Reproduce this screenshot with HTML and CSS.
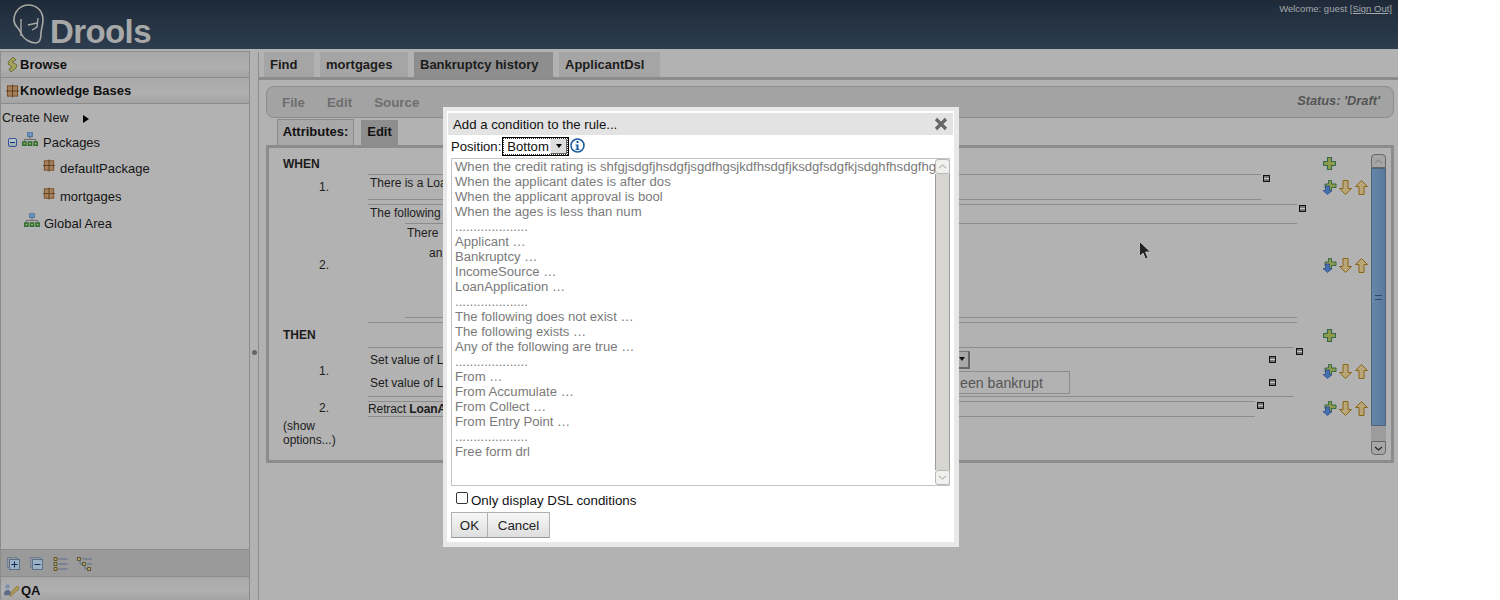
FILE: index.html
```html
<!DOCTYPE html>
<html lang="en">
<head>
<meta charset="utf-8">
<title>Drools Guvnor</title>
<link rel="stylesheet" href="styles.css">
</head>
<body>
<svg class="defs" width="0" height="0">
  <defs>
    <symbol id="pkg" viewBox="0 0 14 14">
      <rect x="1.5" y="1.5" width="11" height="11" fill="#a5805c" stroke="#75481f"/>
      <path d="M7 0v14M0 7h14" stroke="#5c3a1a" stroke-width="1"/>
    </symbol>
    <symbol id="tree" viewBox="0 0 17 15">
      <rect x="6" y="0" width="5" height="5" fill="#6f93bd" stroke="#4d6f99" stroke-width="1"/>
      <path d="M8.5 5v3M2.5 10V8h12v2" stroke="#666" fill="none"/>
      <path d="M0 10h5v5H0zM6 10h5v5H6zM12 10h5v5h-5z" fill="#2f6b2f"/>
      <path d="M1.5 11.500h2v2h-2zM7.500 11.500h2v2h-2zM13.500 11.500h2v2h-2z" fill="#8db36b"/>
    </symbol>
    <symbol id="plus" viewBox="0 0 13 13">
      <path d="M4.500.5h4v4h4v4h-4v4h-4v-4h-4v-4h4z" fill="#8f9a4a" stroke="#356b4c" stroke-width="1.200"/>
    </symbol>
    <symbol id="addnear" viewBox="0 0 15 15">
      <path d="M6.500.5h3v3.500h4.500v3.500H9.500v3.500h-3V7.500H3V4h3.500z" fill="#8f9a4a" stroke="#356b4c"/>
      <path d="M3.500 6h4v4.500h2.500L5.500 14.500 1 10.500h2.500z" fill="#466fb0" stroke="#2b4f8c" stroke-width=".8"/>
    </symbol>
    <symbol id="down" viewBox="0 0 13 15">
      <path d="M4 .5h5v8h3.500L6.500 14.500.5 8.500H4z" fill="#b8a678" stroke="#8a6518"/>
    </symbol>
    <symbol id="up" viewBox="0 0 13 15">
      <path d="M4 14.500h5v-8h3.500L6.500.5.500 6.500H4z" fill="#b8a678" stroke="#8a6518"/>
    </symbol>
    <symbol id="minus" viewBox="0 0 7 7">
      <rect x=".5" y=".5" width="6" height="6" fill="#777" stroke="#111"/>
      <path d="M1 3.500h5" stroke="#ccc"/>
    </symbol>
  </defs>
</svg>
<div class="app">
  <header class="topbar">
    <div class="logo">
      <svg class="head" viewBox="0 0 32 41" width="32" height="41">
        <path d="M1 16C1 6 9 1 15 1c10 0 15 7 15 15 0 5-2 10-2 13 0 6-2 10-5 10-6 0-12-4-14-8-2-4-3-6-5-8-2-2-3-4-3-7z" fill="none" stroke="#a8a8a4" stroke-width="1.600"/>
        <path d="M8 15v17M15 21l9-2M19 26l5-3 1-9" fill="none" stroke="#a8a8a4" stroke-width="1.400"/>
      </svg>
      <span class="logo-text">Drools</span>
    </div>
    <div class="welcome">Welcome: guest <a class="signout">[Sign Out]</a></div>
  </header>
  <div class="main">
    <aside class="sidebar">
      <div class="acc-head"><svg class="acc-ico" viewBox="0 0 13 15" width="13" height="15"><path d="M7 0l3 3-4 2 5 3-1 3-5 4-2-3 3-2-4-3 1-3z" fill="#a3a35a" stroke="#66663a" stroke-width=".9"/></svg>Browse</div>
      <div class="acc-head"><svg class="acc-ico" width="13" height="14"><use href="#pkg"/></svg>Knowledge Bases</div>
      <div class="acc-body">
        <div class="create">Create New<span class="tri"></span></div>
        <div class="node node-packages"><span class="toggle"></span><svg class="tree-ico" width="16" height="14"><use href="#tree"/></svg>Packages</div>
        <div class="node node-leaf"><svg class="pkg-ico" width="12" height="13"><use href="#pkg"/></svg>defaultPackage</div>
        <div class="node node-leaf"><svg class="pkg-ico" width="12" height="13"><use href="#pkg"/></svg>mortgages</div>
        <div class="node node-global"><svg class="tree-ico" width="16" height="14"><use href="#tree"/></svg>Global Area</div>
      </div>
      <div class="tree-tools">
        <svg viewBox="0 0 14 14" width="14" height="14"><path d="M.5.5h10v2M.5.5v10h2" fill="none" stroke="#6d7f96"/><rect x="2.500" y="2.500" width="10" height="10" fill="#9cb0c4" stroke="#5b7088"/><path d="M4.500 7.500h6M7.500 4.500v6" stroke="#0c3057"/></svg>
        <svg viewBox="0 0 14 14" width="14" height="14"><path d="M.5.5h10v2M.5.5v10h2" fill="none" stroke="#6d7f96"/><rect x="2.500" y="2.500" width="10" height="10" fill="#9cb0c4" stroke="#5b7088"/><path d="M4.500 7.500h6" stroke="#0c3057"/></svg>
        <svg viewBox="0 0 14 14" width="15" height="14"><path d="M.5.5h3v3h-3zM.5 5.500h3v3h-3zM.5 10.500h3v3h-3z" fill="#a9a382" stroke="#5e5620"/><path d="M5 2h9M5 7h9M5 12h9" stroke="#5b7088"/></svg>
        <svg viewBox="0 0 15 14" width="15" height="14"><path d="M.5.500h3v3h-3zM5.500 5.500h3v3h-3zM10.500 10.500h3v3h-3z" fill="#a9a382" stroke="#5e5620"/><path d="M5 2h10M10 7h5M3 3v4h2M8 8v4h2" stroke="#5b7088" fill="none"/></svg>
      </div>
      <div class="acc-head acc-qa"><svg class="acc-ico" viewBox="0 0 18 14" width="16" height="14"><circle cx="4" cy="3" r="2.500" fill="#7e8fae"/><path d="M0 13c0-4 1-6 4-6s4 2 4 6z" fill="#5d6c88"/><path d="M6 13l5-7 3-3 3 1-1 3-3 2-5 5z" fill="#b09a5a" stroke="#7a6630" stroke-width=".7"/></svg>QA</div>
    </aside>
    <div class="splitter"><span class="split-dot"></span></div>
    <section class="content">
      <nav class="doc-tabs">
        <div class="doc-tab">Find</div>
        <div class="doc-tab">mortgages</div>
        <div class="doc-tab doc-tab-on">Bankruptcy history</div>
        <div class="doc-tab">ApplicantDsl</div>
      </nav>
      <div class="toolbar">
        <span class="tool">File</span><span class="tool">Edit</span><span class="tool">Source</span>
        <span class="status">Status: 'Draft'</span>
      </div>
      <div class="sub-tabs">
        <div class="sub-tab">Attributes:</div>
        <div class="sub-tab sub-tab-on">Edit</div>
      </div>
      <div class="rule-panel">
        <div class="rule-body">
          <div class="row row-head row-when">
            <div class="head-label">WHEN</div>
            <div class="actions"><svg class="act-plus" width="13" height="13"><use href="#plus"/></svg></div>
          </div>
          <div class="row row-c1">
            <div class="num">1.</div>
            <div class="cell-wrap">
              <div class="cell cell-c1">There is a Loa</div>
              <svg class="mini" width="7" height="7"><use href="#minus"/></svg>
            </div>
            <div class="actions"><svg width="15" height="15"><use href="#addnear"/></svg><svg width="13" height="15"><use href="#down"/></svg><svg width="13" height="15"><use href="#up"/></svg></div>
          </div>
          <div class="row row-c2">
            <div class="num">2.</div>
            <div class="cell-wrap">
              <div class="cell cell-c2">
                <div class="cell-line">The following</div>
                <div class="inner">
                  <div class="inner-a">There</div>
                  <div class="inner-b">an</div>
                </div>
              </div>
              <svg class="mini" width="7" height="7"><use href="#minus"/></svg>
            </div>
            <div class="actions"><svg width="15" height="15"><use href="#addnear"/></svg><svg width="13" height="15"><use href="#down"/></svg><svg width="13" height="15"><use href="#up"/></svg></div>
          </div>
          <div class="row row-head row-then">
            <div class="head-label">THEN</div>
            <div class="actions"><svg class="act-plus" width="13" height="13"><use href="#plus"/></svg></div>
          </div>
          <div class="row row-a1">
            <div class="num">1.</div>
            <div class="cell-wrap">
              <div class="cell cell-a1">
                <div class="set-line">
                  <span class="set-text set-text-a">Set value of L</span>
                  <span class="select-end"><span class="select-tri"></span></span>
                  <svg class="mini mini-set" width="7" height="7"><use href="#minus"/></svg>
                </div>
                <div class="set-line">
                  <span class="set-text set-text-b">Set value of L</span>
                  <input class="set-input" value="een bankrupt" readonly>
                  <svg class="mini mini-set" width="7" height="7"><use href="#minus"/></svg>
                </div>
              </div>
              <svg class="mini" width="7" height="7"><use href="#minus"/></svg>
            </div>
            <div class="actions"><svg width="15" height="15"><use href="#addnear"/></svg><svg width="13" height="15"><use href="#down"/></svg><svg width="13" height="15"><use href="#up"/></svg></div>
          </div>
          <div class="row row-a2">
            <div class="num">2.</div>
            <div class="cell-wrap">
              <div class="cell cell-a2">Retract <b>LoanA</b></div>
              <svg class="mini" width="7" height="7"><use href="#minus"/></svg>
            </div>
            <div class="actions"><svg width="15" height="15"><use href="#addnear"/></svg><svg width="13" height="15"><use href="#down"/></svg><svg width="13" height="15"><use href="#up"/></svg></div>
          </div>
          <div class="options">(show<br>options...)</div>
        </div>
        <div class="vscroll">
          <div class="vbtn vbtn-up"><svg width="9" height="5" viewBox="0 0 9 5"><path d="M1 4l3.500-3L8 4" fill="none" stroke="#8a8a8a" stroke-width="1.200"/></svg></div>
          <div class="vthumb"><span class="grip"></span></div>
          <div class="vtrack"></div>
          <div class="vbtn vbtn-down"><svg width="9" height="5" viewBox="0 0 9 5"><path d="M1 1l3.500 3L8 1" fill="none" stroke="#222" stroke-width="1.200"/></svg></div>
        </div>
      </div>
    </section>
  </div>
</div>

<svg class="cursor" width="12" height="19" viewBox="0 0 12 19"><path d="M.5.500v15l3.500-3.500 2.500 6 2.500-1-2.500-6h5z" fill="#222" stroke="#ccc" stroke-width=".8"/></svg>

<div class="dialog">
  <div class="dialog-inner">
    <div class="caption">Add a condition to the rule...<svg class="close" width="14" height="14" viewBox="0 0 14 14"><path d="M2 2l10 10M12 2L2 12" stroke="#666" stroke-width="3.200"/></svg></div>
    <div class="pos-row">Position:<span class="pos-select"><span class="pos-val">Bottom</span><span class="pos-btn"><span class="pos-tri"></span></span></span>
      <svg class="info" width="15" height="15" viewBox="0 0 15 15"><circle cx="7.500" cy="7.500" r="6.500" fill="#fff" stroke="#155a9e" stroke-width="1.500"/><rect x="6.500" y="3" width="2" height="2" fill="#155a9e"/><path d="M5.500 6.500h3v4.500h1v1h-4v-1h1V7.500h-1z" fill="#155a9e"/></svg>
    </div>
    <div class="listbox">
      <ul class="list">
        <li>When the credit rating is shfgjsdgfjhsdgfjsgdfhgsjkdfhsdgfjksdgfsdgfkjsdghfhsdgfhgjsdhfg</li>
        <li>When the applicant dates is after dos</li>
        <li>When the applicant approval is bool</li>
        <li>When the ages is less than num</li>
        <li>....................</li>
        <li>Applicant …</li>
        <li>Bankruptcy …</li>
        <li>IncomeSource …</li>
        <li>LoanApplication …</li>
        <li>....................</li>
        <li>The following does not exist …</li>
        <li>The following exists …</li>
        <li>Any of the following are true …</li>
        <li>....................</li>
        <li>From …</li>
        <li>From Accumulate …</li>
        <li>From Collect …</li>
        <li>From Entry Point …</li>
        <li>....................</li>
        <li>Free form drl</li>
      </ul>
      <div class="list-scroll">
        <div class="ls-btn"><svg width="9" height="5" viewBox="0 0 9 5"><path d="M1 4l3.500-3L8 4" fill="none" stroke="#bbb" stroke-width="1.200"/></svg></div>
        <div class="ls-track"></div>
        <div class="ls-btn"><svg width="9" height="5" viewBox="0 0 9 5"><path d="M1 1l3.500 3L8 1" fill="none" stroke="#bbb" stroke-width="1.200"/></svg></div>
      </div>
    </div>
    <label class="dsl"><span class="check"></span>Only display DSL conditions</label>
    <div class="buttons"><button class="btn btn-ok">OK</button><button class="btn btn-cancel">Cancel</button></div>
  </div>
</div>
</body>
</html>
```
FILE: styles.css
```css
* { box-sizing: border-box; }
html, body { margin: 0; padding: 0; height: 600px; overflow: hidden; background: #fff; }
body { font-family: "Liberation Sans", Arial, sans-serif; color: #111; position: relative; }
.defs { position: absolute; }
svg { display: block; flex: none; }

.app { width: 1398px; height: 600px; display: flex; flex-direction: column; background: #b2b2b2; }
.topbar { height: 49px; flex: none; display: flex; justify-content: space-between; background: linear-gradient(#1e2a38, #2d3d4f); }
.logo { display: flex; align-items: flex-start; padding: 4px 0 0 13px; }
.logo-text { font: bold 33px/36px "Liberation Sans", sans-serif; color: #a8a8a8; margin: 10px 0 0 5px; letter-spacing: -.6px; }
.welcome { font-size: 9.500px; line-height: 12px; color: #a5a8ab; padding: 3px 6px 0 0; }
.signout { text-decoration: underline; color: #a5a8ab; }

.main { flex: 1; display: flex; min-height: 0; }
.sidebar { width: 250px; margin-top: 2px; flex: none; display: flex; flex-direction: column; border: 1px solid #8c8c8c; border-bottom: 0; background: #b2b2b2; }
.acc-head { height: 26px; flex: none; display: flex; align-items: center; padding-left: 5px; font-weight: bold; font-size: 13px; color: #111; background: linear-gradient(#a8a8a8, #b0b0b0 60%, #a4a4a4); border-bottom: 1px solid #8c8c8c; }
.acc-ico { margin-right: 1px; }
.acc-qa { height: 23px; border-bottom: 0; padding: 3px 0 0 3px; }
.acc-body { flex: 1; min-height: 0; font-size: 13px; }
.create { height: 15px; margin: 7px 0 0 1px; line-height: 15px; display: flex; align-items: center; color: #151515; font-size: 12.600px; }
.tri { width: 0; height: 0; margin-left: 14px; border-left: 6px solid #000; border-top: 4.500px solid transparent; border-bottom: 4.500px solid transparent; }
.node { display: flex; align-items: center; height: 16px; color: #151515; font-size: 13px; }
.node-packages { margin-top: 8px; padding-left: 7px; }
.toggle { width: 9px; height: 9px; margin-right: 5px; border: 1px solid #3b4f9b; border-radius: 2px; background: linear-gradient(#bcc, #9aa); position: relative; flex: none; }
.toggle::after { content: ""; position: absolute; left: 1px; right: 1px; top: 3px; height: 1px; background: #1b2f7b; }
.tree-ico { margin-right: 5px; position: relative; top: -3px; }
.node-leaf { padding-left: 42px; margin-top: 10px; }
.node-leaf + .node-leaf { margin-top: 12px; }
.pkg-ico { margin-right: 5px; position: relative; top: -3px; }
.node-global { padding-left: 23px; margin-top: 11px; }
.node-global .tree-ico { margin-right: 4px; }
.tree-tools { height: 28px; flex: none; display: flex; align-items: center; padding: 1px 0 0 6px; gap: 9px; background: #9a9a9a; border-top: 1px solid #8c8c8c; border-bottom: 1px solid #8c8c8c; }

.splitter { width: 8px; flex: none; display: flex; align-items: center; justify-content: center; background: #b2b2b2; }
.split-dot { width: 5px; height: 5px; border-radius: 50%; background: #666; margin-top: 55px; }

.content { flex: 1; min-width: 0; border-left: 1px solid #8c8c8c; margin-top: 3px; display: flex; flex-direction: column; }
.doc-tabs { height: 28px; flex: none; display: flex; gap: 6px; padding-left: 5px; border-bottom: 3px solid #8c8c8c; }
.doc-tab { height: 25px; line-height: 25px; padding: 0 6px; font-weight: bold; font-size: 13px; color: #1c1c1c; background: #a5a5a5; }
.doc-tab:first-child { width: 50px; }
.doc-tab:nth-child(2) { width: 88px; }
.doc-tab:nth-child(3) { width: 139px; background: #8e8e8e; }
.doc-tab:nth-child(4) { width: 101px; }

.toolbar { height: 32px; flex: none; margin: 6px 4px 0 7px; display: flex; align-items: center; padding-left: 15px; border: 1px solid #8c8c8c; border-radius: 8px; background: #a3a3a3; font-weight: bold; font-size: 13.330px; color: #6e6e6e; }
.tool { margin-right: 22px; }
.status { margin-left: auto; margin-right: 13px; margin-bottom: 4px; font-style: italic; font-size: 12.800px; color: #555; }

.sub-tabs { height: 27px; flex: none; display: flex; align-items: flex-end; gap: 7px; padding-left: 18px; }
.sub-tab { height: 26px; width: 77px; line-height: 24px; text-align: center; font-weight: bold; font-size: 13px; border: 1px solid #8c8c8c; border-bottom: 0; background: #a8a8a8; color: #111; }
.sub-tab-on { width: 37px; height: 25px; border: 0; background: #8e8e8e; }

.rule-panel { height: 318px; flex: none; margin: 0 4px 0 7px; border: 3px solid #8c8c8c; display: flex; background: #b2b2b2; }
.rule-body { flex: none; width: 1102px; font-size: 12px; color: #1c1c1c; }
.vscroll { width: 15px; margin-top: 6px; height: 301px; display: flex; flex-direction: column; }
.vbtn { height: 14px; flex: none; background: #a6a6a6; border: 1px solid #666; display: flex; align-items: center; justify-content: center; }
.vbtn-up { border-radius: 4px 4px 0 0; }
.vbtn-down { border-radius: 0 0 4px 4px; }
.vthumb { height: 258px; flex: none; background: linear-gradient(90deg, #6686a9, #5a7a9c); border: 1px solid #4e6477; display: flex; align-items: center; justify-content: center; }
.grip { width: 7px; height: 5px; border-top: 1px solid #2e4763; border-bottom: 1px solid #2e4763; }
.vtrack { flex: 1; background: #9c9c9c; }

.row { display: flex; }
.num { width: 99px; flex: none; padding-left: 50px; align-self: center; font-size: 12px; line-height: 14px; }
.cell-wrap { width: 952px; flex: none; display: flex; align-items: flex-start; }
.cell { border-top: 1px solid #8c8c8c; border-bottom: 1px solid #8c8c8c; flex: none; }
.mini { transform: translateY(1px); }
.actions { width: 51px; flex: none; display: flex; gap: 2px; align-items: center; padding-left: 2px; }
.actions svg:last-child { margin-left: 1px; }
.actions .act-plus { margin-left: 1px; }
.head-label { width: 1051px; flex: none; padding-left: 14px; font-weight: bold; font-size: 12px; line-height: 14px; }

.row-when { height: 26px; align-items: flex-start; padding-top: 9px; }
.row-then { height: 24px; align-items: flex-start; padding-top: 5px; }
.row-then .actions { height: 13px; margin-top: 1px; }

.row-c1 { height: 26px; margin-bottom: 4px; }
.cell-c1 { width: 893px; height: 26px; padding: 1px 0 0 2px; line-height: 14px; }
.row-c1 .mini { margin-left: 2px; }
.row-c2 { height: 119px; }
.row-c2 .num, .row-c2 .actions { margin-top: 3px; }
.cell-c2 { width: 929px; height: 119px; line-height: 14px; padding: 1px 0 0 2px; }
.row-c2 .mini { margin-left: 2px; }
.cell-line { height: 17px; }
.inner { margin-left: 35px; height: 95px; border-top: 1px solid #8c8c8c; border-bottom: 1px solid #8c8c8c; padding-top: 2px; }
.inner-a { height: 20px; padding-left: 2px; }
.inner-b { padding-left: 24px; }

.row-a1 { height: 50px; margin-bottom: 4px; }
.row-a1 > .num, .row-a1 > .actions, .row-a2 > .num, .row-a2 > .actions { margin-bottom: 2px; }
.cell-a1 { width: 926px; height: 50px; }
.row-a1 > .cell-wrap > .mini { margin-left: 2px; }
.set-line { height: 23px; display: flex; align-items: center; padding-left: 2px; position: relative; }
.set-text { flex: none; line-height: 14px; }
.set-text-a { width: 520px; }
.set-text-b { width: 580px; }
.select-end { width: 80px; height: 18px; background: #a8a8a8; border: 1px solid #777; border-right: 2px solid #666; border-bottom: 2px solid #666; display: flex; align-items: center; justify-content: flex-end; padding-right: 3px; }
.select-tri { width: 0; height: 0; border-top: 4px solid #111; border-left: 3.500px solid transparent; border-right: 3.500px solid transparent; }
.set-input { width: 120px; height: 23px; flex: none; border: 1px solid #8c8c8c; background: #b2b2b2; padding: 0 0 0 9px; font: 14.200px "Liberation Sans", sans-serif; color: #555; outline: 0; }
.mini-set { position: absolute; left: 901px; top: 8px; margin: 0; transform: none; }

.row-a2 { height: 16px; margin-bottom: 2px; }
.cell-a2 { width: 887px; height: 16px; line-height: 14px; white-space: nowrap; letter-spacing: -.1px; }
.row-a2 .mini { margin-left: 2px; }
.options { padding-left: 14px; line-height: 14px; font-size: 12px; }

.cursor { position: absolute; left: 1139px; top: 241px; }

.dialog { position: absolute; left: 443px; top: 107px; width: 516px; height: 440px; background: #e8e8e8; padding: 4px 5px 5px 4px; }
.dialog-inner { width: 507px; height: 431px; background: #fff; font-size: 13.120px; color: #111; padding: 2px 0 0 1px; }
.caption { width: 505px; height: 22px; background: #e3e3e3; padding: 1px 5px 0 5px; font-size: 13.200px; display: flex; align-items: center; justify-content: space-between; }
.close { margin-top: -2px; }
.pos-row { display: flex; align-items: center; height: 21px; margin: 1px 0 0 3px; line-height: 15px; }
.pos-select { width: 67px; height: 19px; border: 1px solid #000; outline: 1px dotted #333; outline-offset: -2px; display: flex; align-items: center; justify-content: space-between; margin-left: 1px; }
.pos-val { padding-left: 4px; }
.pos-btn { width: 17px; height: 15px; margin-right: 1px; background: #ddd; border-right: 1px solid #666; border-bottom: 1px solid #666; border-left: 1px solid #eee; display: flex; align-items: center; justify-content: center; }
.pos-tri { width: 0; height: 0; border-top: 4px solid #000; border-left: 3.500px solid transparent; border-right: 3.500px solid transparent; }
.info { margin: -3px 0 0 1px; }
.listbox { width: 499px; height: 328px; margin: 1px 0 0 3px; border: 1px solid #c4c4c4; display: flex; }
.list { list-style: none; margin: 0; padding: 0 0 0 3px; width: 483px; overflow: hidden; flex: none; color: #7a7a7a; line-height: 15px; }
.list li { white-space: nowrap; height: 15px; }
.list-scroll { width: 15px; flex: none; display: flex; flex-direction: column; }
.ls-btn { height: 15px; flex: none; background: #f0f0ee; border: 1px solid #b8b8b8; border-radius: 3px; display: flex; align-items: center; justify-content: center; }
.ls-track { flex: 1; background: #d7d5d2; border-left: 1px solid #9c9c9c; border-right: 1px solid #9c9c9c; }
.dsl { display: flex; align-items: center; height: 18px; margin: 5px 0 0 8px; font-size: 13.330px; }
.check { width: 12px; height: 12px; border: 1px solid #333; border-radius: 2px; margin: -4px 3px 0 0; flex: none; }
.buttons { display: flex; margin: 3px 0 0 3px; }
.btn { height: 26px; padding: 0; border: 1px solid #b0b0b0; border-bottom: 1px solid #999; background: linear-gradient(#f7f7f7, #dedede); font: 13.330px "Liberation Sans", sans-serif; color: #222; }
.btn-ok { width: 37px; }
.btn-cancel { width: 62px; border-left: 0; }
```
